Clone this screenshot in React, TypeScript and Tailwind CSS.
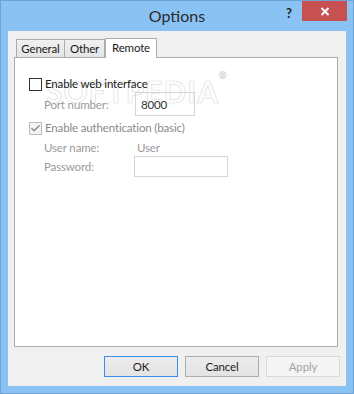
import { Check } from "lucide-react";

const font = "font-['Segoe_UI','Lato',sans-serif]";

function Tab({ label, active, w }: { label: string; active?: boolean; w: string }) {
  if (active) {
    return (
      <div className={`relative z-10 -mb-px flex h-[20px] items-center justify-center border border-b-0 border-[#acacac] bg-white pb-[2px] text-[#1a1a1a] ${w}`}>
        {label}
      </div>
    );
  }
  return (
    <div className={`flex h-[18px] items-center justify-center border border-b-0 border-[#acacac] bg-gradient-to-b from-[#f0f0f0] to-[#e5e5e5] text-[#1a1a1a] [&+&]:border-l-0 ${w}`}>
      {label}
    </div>
  );
}

function Button({ label, primary, disabled }: { label: string; primary?: boolean; disabled?: boolean }) {
  const look = disabled
    ? "border-[#d9d9d9] bg-[#f4f4f4] text-[#a3a3a3]"
    : primary
      ? "border-[#3c8ee8] bg-gradient-to-b from-[#ececec] to-[#e3e3e3] text-[#1a1a1a]"
      : "border-[#adadad] bg-gradient-to-b from-[#ececec] to-[#e3e3e3] text-[#1a1a1a]";
  return (
    <div className={`flex h-[21px] w-[74px] items-center justify-center border ${look}`}>{label}</div>
  );
}

export default function App() {
  return (
    <div className={`flex h-[394px] w-[354px] flex-col border border-[#6fa3d8] bg-[#8ac2f4] text-[11.5px] tracking-[-0.15px] ${font}`}>
      {/* title bar */}
      <div className="relative flex h-[30px] items-center justify-center tracking-normal">
        <span className="text-[16px] text-[#2b2b2b]">Options</span>
        <span className="absolute top-[3px] left-[285px] text-[13px] font-bold text-[#222]">?</span>
        <div className="absolute top-0 left-[301px] flex h-[20px] w-[45px] items-center justify-center bg-[#c75050]">
          <svg width="10" height="9" viewBox="0 0 10 9">
            <path d="M1.5 1 L8.5 8 M8.5 1 L1.5 8" stroke="white" strokeWidth="2" />
          </svg>
        </div>
      </div>

      {/* client area */}
      <div className="mx-[7px] mb-[7px] flex flex-1 flex-col bg-[#f0f0f0]">
        <div className="ml-[6px] mr-[8px] mt-[7px] flex flex-1 flex-col">
          <div className="flex items-end pl-[2px]">
            <Tab label="General" w="w-[49px]" />
            <Tab label="Other" w="w-[40px]" />
            <Tab label="Remote" w="w-[52px]" active />
          </div>
          <div className="relative flex-1 border border-[#acacac] bg-white pl-[14px] pt-[19px]">
            <div className="pointer-events-none absolute top-[11px] left-[31px] text-[30px] font-bold tracking-[1px] text-white [-webkit-text-stroke:0.7px_#dedede]">
              SOFTPEDIA<span className="align-top text-[9px]">®</span>
            </div>

            <div className="relative flex flex-col">
              <label className="flex h-[14px] items-center gap-[3px] text-[#1a1a1a]">
                <span className="h-[13px] w-[13px] border border-[#333] bg-white" />
                Enable web interface
              </label>

              <div className="mt-px flex items-center pl-[15px]">
                <span className="w-[91px] pt-[2px] text-[#9a9a9a]">Port number:</span>
                <div className="flex h-[24px] w-[60px] items-start border border-[#d5d5d5] px-[5px] pt-[3px] text-[#333]">
                  8000
                </div>
              </div>

              <label className="mt-[5px] flex h-[14px] items-center gap-[3px] text-[#8a8a8a]">
                <span className="flex h-[13px] w-[13px] items-center justify-center border border-[#bcbcbc] bg-[#f4f4f4]">
                  <Check size={11} strokeWidth={3} className="text-[#8a8a8a]" />
                </span>
                Enable authentication (basic)
              </label>

              <div className="mt-[5px] flex h-[16px] items-center pl-[15px] text-[#9a9a9a]">
                <span className="w-[93px]">User name:</span>
                <span>User</span>
              </div>

              <div className="mt-0 flex items-center pl-[15px]">
                <span className="w-[90px] text-[#9a9a9a]">Password:</span>
                <div className="h-[21px] w-[94px] border border-[#d5d5d5]" />
              </div>
            </div>
          </div>
        </div>

        <div className="flex justify-end gap-[7px] pb-[9px] pr-[6px] pt-[9px]">
          <Button label="OK" primary />
          <Button label="Cancel" />
          <Button label="Apply" disabled />
        </div>
      </div>
    </div>
  );
}
